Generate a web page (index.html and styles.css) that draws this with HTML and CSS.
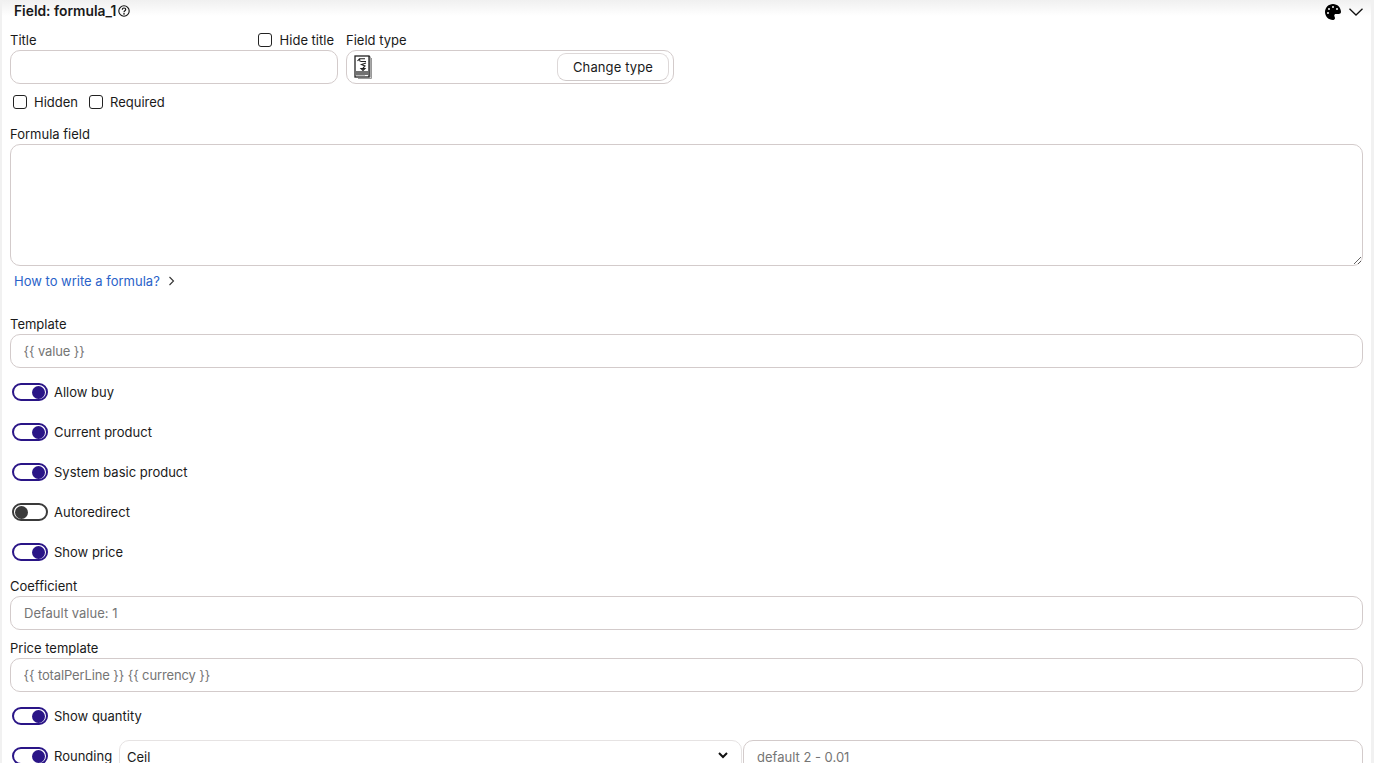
FILE: index.html
```html
<!DOCTYPE html>
<html lang="en">
<head>
<meta charset="utf-8">
<title>Field: formula_1</title>
<link rel="stylesheet" href="styles.css">
</head>
<body>
<main class="panel">
  <header class="head">
    <div class="head-title"><strong>Field: formula_1</strong>
      <svg class="help" viewBox="0 0 12 12" width="12" height="12"><circle cx="6" cy="6" r="5.200" fill="none" stroke="#111" stroke-width="1.100"/><path d="M4.300 4.800C4.300 3.600 5 3 6 3s1.700.6 1.700 1.500c0 1.400-1.700 1.200-1.700 2.700" fill="none" stroke="#111" stroke-width="1.200"/><circle cx="6" cy="8.900" r=".8" fill="#111"/></svg>
    </div>
    <div class="head-actions">
      <svg class="palette" viewBox="0 0 512 512" width="16" height="16"><path fill="#000" d="M512 256c0 .9 0 1.8 0 2.7c-.4 36.5-33.6 61.3-70.1 61.3H344c-26.5 0-48 21.5-48 48c0 3.4 .4 6.7 1 9.9c2.1 10.2 6.5 20 10.8 29.9c6.1 13.8 12.1 27.5 12.1 42c0 31.8-21.6 60.7-53.4 62c-3.5 .1-7 .2-10.6 .2C114.6 512 0 397.4 0 256S114.6 0 256 0S512 114.6 512 256zM128 288a32 32 0 1 0 -64 0 32 32 0 1 0 64 0zm0-96a32 32 0 1 0 0-64 32 32 0 1 0 0 64zM288 96a32 32 0 1 0 -64 0 32 32 0 1 0 64 0zm96 96a32 32 0 1 0 0-64 32 32 0 1 0 0 64z"/></svg>
      <svg class="chev" viewBox="0 0 14 8" width="14" height="8"><path d="M.5.7L7 7l6.500-6.300" fill="none" stroke="#111" stroke-width="1.300"/></svg>
    </div>
  </header>

  <section class="top-row">
    <div class="col">
      <div class="label-row">
        <label class="label">Title</label>
        <label class="check check-tight"><input type="checkbox"><span>Hide title</span></label>
      </div>
      <input class="input" type="text">
    </div>
    <div class="col">
      <div class="label-row"><span class="label">Field type</span></div>
      <div class="type-box">
        <svg class="type-icon" viewBox="0 0 18 24" width="18" height="24">
          <path d="M2.500 1.500h13.500v21" fill="none" stroke="#555" stroke-width="1"/>
          <path d="M17.500 3v20.500H4" fill="none" stroke="#999" stroke-width="1"/>
          <rect x="1" y="1" width="14" height="21" fill="#fff" stroke="#222" stroke-width="1.300"/>
          <path d="M3.500 6L5.500 3.800 11 3.800M5.500 3.800L6 6.500M6.500 6.500h5.500M12 8L7.500 9.500 11 11 9 13M7 13.500h4L9 15.500z" fill="none" stroke="#222" stroke-width="1.100"/>
          <path d="M2 17h12M2 19h12" stroke="#444" stroke-width="1.300"/>
          <path d="M2 21h9" stroke="#777" stroke-width="1"/>
        </svg>
        <button class="btn" type="button">Change type</button>
      </div>
    </div>
  </section>

  <section class="checks">
    <label class="check"><input type="checkbox"><span>Hidden</span></label>
    <label class="check"><input type="checkbox"><span>Required</span></label>
  </section>

  <section class="formula">
    <label class="label">Formula field</label>
    <textarea class="textarea"></textarea>
    <div class="link-row"><a class="link" href="#">How to write a formula?</a>
      <svg viewBox="0 0 7 10" width="7" height="10"><path d="M1.500 1l4 4-4 4" fill="none" stroke="#333" stroke-width="1.100"/></svg>
    </div>
  </section>

  <section class="field template">
    <label class="label">Template</label>
    <input class="input input-tpl" type="text" placeholder="{{ value }}">
  </section>

  <div class="toggles">
    <label class="toggle-row"><span class="toggle on"></span><span>Allow buy</span></label>
    <label class="toggle-row"><span class="toggle on"></span><span>Current product</span></label>
    <label class="toggle-row"><span class="toggle on"></span><span>System basic product</span></label>
    <label class="toggle-row"><span class="toggle off"></span><span>Autoredirect</span></label>
    <label class="toggle-row"><span class="toggle on"></span><span>Show price</span></label>
  </div>

  <section class="field">
    <label class="label">Coefficient</label>
    <input class="input" type="text" placeholder="Default value: 1">
  </section>
  <section class="field field-gap">
    <label class="label">Price template</label>
    <input class="input input-tpl" type="text" placeholder="{{ totalPerLine }} {{ currency }}">
  </section>

  <label class="toggle-row"><span class="toggle on"></span><span>Show quantity</span></label>

  <div class="rounding">
    <label class="toggle-row rounding-toggle"><span class="toggle on"></span><span>Rounding</span></label>
    <div class="select-wrap">
      <select class="select"><option>Ceil</option></select>
      <svg class="select-chev" viewBox="0 0 10 7" width="10" height="7"><path d="M1 1l4 4 4-4" fill="none" stroke="#111" stroke-width="2"/></svg>
    </div>
    <input class="input rounding-input" type="text" placeholder="default 2 - 0.01">
  </div>
</main>
</body>
</html>
```
FILE: styles.css
```css
* { box-sizing: border-box; }
html, body { margin: 0; height: 763px; overflow: hidden; }
body {
  background: #f1f1f1;
  font-family: Inter, "Liberation Sans", sans-serif;
  font-size: 13px;
  line-height: 20px;
  color: #1a1a1a;
}
.panel {
  margin: 0 3px 0 2px;
  height: 763px;
  padding: 0 8px;
  background: linear-gradient(#f0f0f0 0, #fff 16px);
  overflow: hidden;
}
.head {
  display: flex;
  justify-content: space-between;
  align-items: center;
  height: 22px;
  padding: 0 0 0 4px;
}
.head-title { display: flex; align-items: center; gap: 2px; }
.head-title strong { font-size: 13.8px; font-weight: 600; }
.help { margin-top: -1px; }
.head-actions { display: flex; align-items: center; gap: 8px; margin: 2px 0 0 0; }
.top-row { display: flex; gap: 8px; margin-top: 8px; }
.col { width: 328px; }
.label-row { display: flex; justify-content: space-between; align-items: center; height: 20px; }
.label { display: block; height: 20px; }
.input {
  display: block;
  width: 100%;
  height: 34px;
  padding: 0 13px;
  border: 1px solid #d3cbcb;
  border-radius: 10px;
  background: #fff;
  font: inherit;
  color: inherit;
  outline: none;
}
.input::placeholder { color: #757575; opacity: 1; }
.input-tpl { padding-left: 12.5px; }
.input-tpl::placeholder { letter-spacing: -0.12px; }
.type-box {
  display: flex;
  justify-content: space-between;
  align-items: center;
  height: 34px;
  padding: 0 4px 0 7px;
  border: 1px solid #d3cbcb;
  border-radius: 10px;
}
.type-icon { display: block; }
.btn {
  width: 112px;
  height: 28px;
  padding: 0;
  border: 1px solid #ddd8d8;
  border-bottom-color: #cfc9c9;
  border-radius: 9px;
  background: #fff;
  font: inherit;
  letter-spacing: 0.12px;
  color: #1a1a1a;
}
.check { display: inline-flex; align-items: center; gap: 7px; }
.check-tight { gap: 8px; padding-right: 4px; margin-left: auto; }
.check input {
  appearance: none;
  width: 14px;
  height: 14px;
  margin: 0;
  border: 1.5px solid #222;
  border-radius: 3px;
  background: #fff;
}
.checks { display: flex; gap: 11px; height: 20px; margin-top: 8px; padding-left: 3px; }
.formula { margin-top: 12px; }
.textarea {
  display: block;
  width: 100%;
  height: 122px;
  border: 1px solid #d3cbcb;
  border-radius: 10px;
  background: #fff;
  resize: vertical;
  outline: none;
}
.link-row { display: flex; align-items: center; gap: 8px; height: 20px; margin-top: 5px; padding-left: 4px; }
.link { color: #2a62c9; text-decoration: none; }
.template { margin-top: 23px; }
.toggles { margin-top: 4px; margin-bottom: 4px; }
.toggle-row { display: flex; align-items: center; gap: 6px; height: 40px; padding-left: 2px; }
.toggle {
  display: flex;
  align-items: center;
  width: 36px;
  height: 18px;
  padding: 0 1px;
  border: 2px solid #2a1587;
  border-radius: 9px;
  background: #fff;
}
.toggle::after {
  content: "";
  width: 13px;
  height: 13px;
  border-radius: 50%;
  background: #2a1587;
}
.toggle.on { justify-content: flex-end; }
.toggle.off { border-color: #3a3a3a; }
.toggle.off::after { background: #3a3a3a; }
.field-gap { margin-top: 8px; }
.field-gap + .toggle-row { margin-top: 4px; }
.rounding { display: flex; align-items: flex-start; }
.rounding-toggle { flex: none; width: 109px; }
.select-wrap { position: relative; flex: none; width: 623px; margin-top: 4px; }
.select {
  display: block;
  width: 100%;
  height: 34px;
  padding: 0 7px;
  appearance: none;
  border: 1px solid #e6e3e3;
  border-radius: 10px;
  background: #fff;
  font: inherit;
  color: #1a1a1a;
  outline: none;
}
.select-chev { position: absolute; top: 12px; right: 14px; }
.rounding-input { flex: 1; width: auto; min-width: 0; margin: 4px 0 0 1px; }
```
